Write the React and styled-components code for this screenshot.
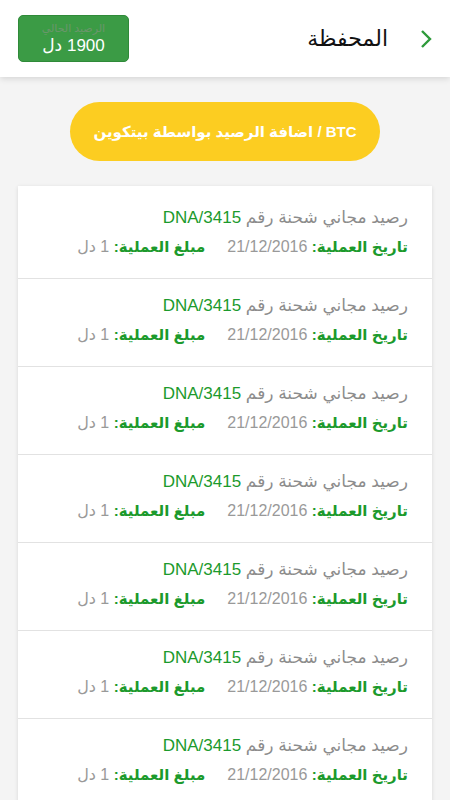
import React from 'react';
import styled, { createGlobalStyle } from 'styled-components';

const Global = createGlobalStyle`
    html, body {
        margin: 0;
        padding: 0;
        background: #f4f4f4;
        font-family: "Liberation Sans", "DejaVu Sans", sans-serif;
    }
`;

const Page = styled.div`
    direction: rtl;
    width: 450px;
    min-height: 800px;
    background: #f4f4f4;
    overflow: hidden;
`;

const Header = styled.header`
    height: 77px;
    background: #fff;
    display: flex;
    align-items: center;
    padding: 0 18px 0 18px;
    box-sizing: border-box;
    box-shadow: 0 2px 6px rgba(0, 0, 0, 0.12);
    position: relative;
    z-index: 1;
`;

const Back = styled.div`
    width: 14px;
    display: flex;
    align-items: center;
    margin-left: 30px;
`;

const Title = styled.h1`
    margin: 0;
    font-size: 22px;
    font-weight: normal;
    color: #111;
    flex: 1;
`;

const Balance = styled.div`
    background: #3b9b45;
    border: 1px solid #2f8a39;
    border-radius: 5px;
    width: 111px;
    height: 47px;
    box-sizing: border-box;
    display: flex;
    flex-direction: column;
    align-items: center;
    justify-content: center;
`;

const BalanceLabel = styled.span`
    font-size: 11px;
    color: #6a966b;
    line-height: 14px;
`;

const BalanceValue = styled.span`
    font-size: 17px;
    color: #fff;
    line-height: 22px;
`;

const ButtonWrap = styled.div`
    display: flex;
    justify-content: center;
    padding: 25px 0 25px 0;
`;

const BtcButton = styled.button`
    width: 310px;
    height: 59px;
    border: none;
    border-radius: 30px;
    background: #fccd21;
    color: #fff;
    font-family: inherit;
    font-weight: bold;
    font-size: 15px;
    direction: rtl;
    cursor: pointer;
`;

const Card = styled.div`
    margin: 0 18px;
    background: #fff;
    padding-top: 5px;
    box-shadow: 0 1px 4px rgba(0, 0, 0, 0.12);
`;

const Row = styled.div`
    height: 88px;
    box-sizing: border-box;
    padding: 15px 24px 0 24px;
    border-bottom: 1px solid #e2e2e2;
`;

const RowTitle = styled.div`
    font-size: 17px;
    color: #8c8c8c;
    line-height: 24px;
`;

const Ref = styled.span`
    color: #1c9a2c;
`;

const Meta = styled.div`
    display: flex;
    gap: 22px;
    margin-top: 6px;
    font-size: 15px;
    line-height: 22px;
`;

const Field = styled.span`
    color: #999;
    font-size: 16px;
`;

const Label = styled.b`
    color: #1c9a2c;
    font-size: 15px;
`;

const rows = Array.from({ length: 7 }, (_, i) => ({ id: i, ref: 'DNA/3415', date: '21/12/2016', amount: '1 دل' }));

const App = () => {
    return (
        <Page>
            <Global />
            <Header>
                <Back>
                    <svg width="12" height="20" viewBox="0 0 12 20">
                        <polyline points="2,2 10,10 2,18" fill="none" stroke="#2e9a3a" strokeWidth="2.4" />
                    </svg>
                </Back>
                <Title>المحفظة</Title>
                <Balance>
                    <BalanceLabel>الرصيد الحالي</BalanceLabel>
                    <BalanceValue>1900 دل</BalanceValue>
                </Balance>
            </Header>
            <ButtonWrap>
                <BtcButton>BTC / اضافة الرصيد بواسطة بيتكوين</BtcButton>
            </ButtonWrap>
            <Card>
                {rows.map(r => (
                    <Row key={r.id}>
                        <RowTitle>رصيد مجاني شحنة رقم <Ref>{r.ref}</Ref></RowTitle>
                        <Meta>
                            <Field><Label>تاريخ العملية:</Label> {r.date}</Field>
                            <Field><Label>مبلغ العملية:</Label> {r.amount}</Field>
                        </Meta>
                    </Row>
                ))}
            </Card>
        </Page>
    );
};

export default App;
